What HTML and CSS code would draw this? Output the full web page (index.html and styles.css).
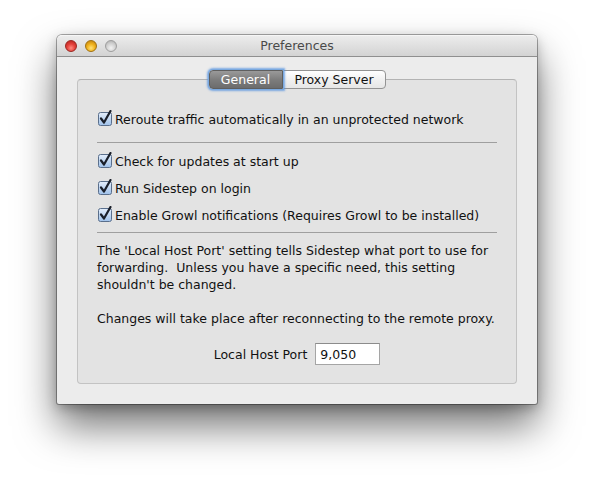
FILE: index.html
```html
<!DOCTYPE html>
<html>
<head>
<meta charset="utf-8">
<title>Preferences</title>
<link rel="stylesheet" href="styles.css">
</head>
<body>
<div class="window">
  <div class="titlebar">
    <div class="lights">
      <span class="light red"></span>
      <span class="light yellow"></span>
      <span class="light gray"></span>
    </div>
    <div class="title">Preferences</div>
  </div>
  <div class="content">
    <div class="tabs">
      <div class="tab selected">General</div>
      <div class="tab">Proxy Server</div>
    </div>
    <div class="group">
      <label class="row first">
        <svg class="check" width="16" height="16" viewBox="0 0 16 16"><defs><linearGradient id="cb" x1="0" y1="0" x2="0" y2="1"><stop offset="0" stop-color="#e4eefb"/><stop offset="1" stop-color="#9fc1ea"/></linearGradient></defs><rect x="1.5" y="2.5" width="13" height="13" rx="2" fill="url(#cb)" stroke="#5a6f8c"/><path d="M4 8.5 L7 12.5 L13.5 1" fill="none" stroke="#1a1f2a" stroke-width="2.2" stroke-linecap="round" stroke-linejoin="round"/></svg>
        <span>Reroute traffic automatically in an unprotected network</span>
      </label>
      <div class="sep sep1"></div>
      <label class="row r2">
        <svg class="check" width="16" height="16" viewBox="0 0 16 16"><rect x="1.5" y="2.5" width="13" height="13" rx="2" fill="url(#cb)" stroke="#5a6f8c"/><path d="M4 8.5 L7 12.5 L13.5 1" fill="none" stroke="#1a1f2a" stroke-width="2.2" stroke-linecap="round" stroke-linejoin="round"/></svg>
        <span>Check for updates at start up</span>
      </label>
      <label class="row">
        <svg class="check" width="16" height="16" viewBox="0 0 16 16"><rect x="1.5" y="2.5" width="13" height="13" rx="2" fill="url(#cb)" stroke="#5a6f8c"/><path d="M4 8.5 L7 12.5 L13.5 1" fill="none" stroke="#1a1f2a" stroke-width="2.2" stroke-linecap="round" stroke-linejoin="round"/></svg>
        <span>Run Sidestep on login</span>
      </label>
      <label class="row">
        <svg class="check" width="16" height="16" viewBox="0 0 16 16"><rect x="1.5" y="2.5" width="13" height="13" rx="2" fill="url(#cb)" stroke="#5a6f8c"/><path d="M4 8.5 L7 12.5 L13.5 1" fill="none" stroke="#1a1f2a" stroke-width="2.2" stroke-linecap="round" stroke-linejoin="round"/></svg>
        <span>Enable Growl notifications (Requires Growl to be installed)</span>
      </label>
      <div class="sep sep2"></div>
      <p class="para">The 'Local Host Port' setting tells Sidestep what port to use for<br>forwarding.&nbsp; Unless you have a specific need, this setting<br>shouldn't be changed.</p>
      <p class="para para2">Changes will take place after reconnecting to the remote proxy.</p>
      <div class="portrow">
        <span class="portlabel">Local Host Port</span>
        <div class="input">9,050</div>
      </div>
    </div>
  </div>
</div>
</body>
</html>
```

FILE: styles.css
```css
html, body {
  margin: 0;
  padding: 0;
  background: #ffffff;
}
body {
  width: 594px;
  height: 483px;
  overflow: hidden;
  padding: 35px 0 0 57px;
  box-sizing: border-box;
  font-family: "DejaVu Sans", "Liberation Sans", sans-serif;
  font-size: 12.5px;
  color: #111;
}
.window {
  width: 480px;
  height: 369px;
  box-sizing: border-box;
  background: #ececec;
  border-radius: 5px 5px 2px 2px;
  box-shadow: 0 0 0 1px rgba(0,0,0,0.32), 0 22px 40px rgba(0,0,0,0.55), 0 4px 12px rgba(0,0,0,0.25);
  display: flex;
  flex-direction: column;
}
.titlebar {
  height: 22px;
  flex: none;
  box-sizing: border-box;
  border-radius: 5px 5px 0 0;
  background: linear-gradient(#ececec, #d3d3d3);
  border-top: 1px solid #f6f6f6;
  border-bottom: 1px solid #8f8f8f;
  display: flex;
  align-items: center;
  position: relative;
}
.lights {
  display: flex;
  gap: 8px;
  padding-left: 8px;
}
.light {
  width: 12px;
  height: 12px;
  border-radius: 50%;
  box-sizing: border-box;
}
.red {
  background: radial-gradient(circle at 50% 70%, #ff8b80 0%, #e5433d 45%, #b01f1a 100%);
  border: 1px solid #9a2620;
}
.yellow {
  background: radial-gradient(circle at 50% 70%, #ffe27a 0%, #f1b31e 45%, #b87a0c 100%);
  border: 1px solid #a0700e;
}
.gray {
  background: radial-gradient(circle at 50% 70%, #f2f2f2 0%, #d2d2d2 50%, #a9a9a9 100%);
  border: 1px solid #9e9e9e;
}
.title {
  position: absolute;
  left: 0;
  right: 0;
  top: 2px;
  text-align: center;
  font-size: 12.5px;
  color: #4a4a4a;
}
.content {
  flex: 1;
  padding: 13px 20px 20px 20px;
  display: flex;
  flex-direction: column;
}
.tabs {
  display: flex;
  justify-content: center;
  position: relative;
  z-index: 1;
  height: 19px;
}
.tab {
  height: 19px;
  box-sizing: border-box;
  line-height: 17px;
  font-size: 12.5px;
  padding: 0 6px;
  border: 1px solid #939393;
  background: linear-gradient(#ffffff, #f1f1f1 50%, #e6e6e6);
  color: #111;
  border-radius: 0 4px 4px 0;
  width: 103px;
  text-align: center;
  white-space: nowrap;
}
.tab.selected {
  width: 74px;
  border-radius: 4px 0 0 4px;
  border-color: #5f5f5f;
  background: linear-gradient(#9a9a9a, #7d7d7d 50%, #6c6c6c);
  color: #fff;
  box-shadow: 0 0 0 1px #7aa9e0, 0 0 2px 2px rgba(90,150,225,0.75);
  position: relative;
  z-index: 2;
}
.group {
  flex: 1;
  margin-top: -10px;
  background: #e3e3e3;
  border: 1px solid #c3c3c3;
  border-top-color: #b3b3b3;
  border-radius: 4px;
  padding: 0 19px 0 19px;
  display: flex;
  flex-direction: column;
}
.row {
  height: 18px;
  display: flex;
  align-items: center;
  gap: 2px;
  margin-top: 9px;
  white-space: nowrap;
}
.row span {
  position: relative;
  top: 1px;
}
.row.first {
  margin-top: 29px;
}
.row.r2 {
  margin-top: 8px;
}
.check {
  flex: none;
  margin-top: -1px;
}
.sep {
  height: 1px;
  background: #9f9f9f;
}
.sep1 {
  margin-top: 15px;
}
.sep2 {
  margin-top: 9px;
}
.para {
  margin: 9px 0 0 0;
  line-height: 17px;
  white-space: nowrap;
}
.para2 {
  margin-top: 17px;
}
.portrow {
  margin-top: auto;
  margin-bottom: 18px;
  display: flex;
  align-items: center;
  justify-content: center;
  gap: 8px;
}
.input {
  width: 65px;
  height: 22px;
  box-sizing: border-box;
  background: #fff;
  border: 1px solid #a5a5a5;
  border-top-color: #8c8c8c;
  padding: 2px 0 0 4px;
  line-height: 17px;
}
```
